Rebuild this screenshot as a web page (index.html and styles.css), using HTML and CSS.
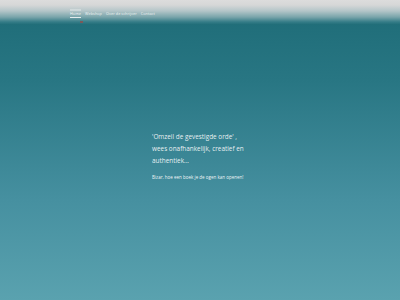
FILE: index.html
```html
<!DOCTYPE html>
<html lang="nl">
<head>
    <meta charset="UTF-8">
    <meta name="viewport" content="width=device-width, initial-scale=1.0">
    <title>Home</title>
    <link rel="stylesheet" href="styles.css">
</head>
<body>
    <header class="top">
        <nav class="menu">
            <a class="menu-item active" href="#">Home</a>
            <a class="menu-item" href="#">Webshop</a>
            <a class="menu-item" href="#">Over de schrijver</a>
            <a class="menu-item" href="#">Contact</a>
        </nav>
        <span class="flag"></span>
    </header>
    <main class="hero">
        <div class="quote">
            <p class="quote-text">'Omzeil de gevestigde orde' ,<br>wees onafhankelijk, creatief en<br>authentiek...</p>
            <p class="quote-sub">Bizar, hoe een boek je de ogen kan openen!</p>
        </div>
    </main>
</body>
</html>
```

FILE: styles.css
```css
html, body {
    margin: 0;
    padding: 0;
    height: 100%;
}
body {
    font-family: "Open Sans", Arial, sans-serif;
    background: linear-gradient(to bottom, #1d6b76 0px, #287683 80px, #4690a0 200px, #5aa2af 300px);
    color: #fff;
    overflow: hidden;
}
.top {
    height: 25px;
    background: linear-gradient(to bottom, #dcdcdc 0px, #d6d7d7 5px, #b3c5c8 11px, #7aa5ab 17px, #347c87 22px, #1e6c77 25px);
    position: relative;
}
.menu {
    display: flex;
    gap: 4px;
    padding-left: 70px;
    padding-top: 11px;
}
.menu-item {
    font-size: 3.8px;
    letter-spacing: 0.05px;
    color: rgba(255, 255, 255, 0.85);
    text-decoration: none;
    line-height: 6px;
}
.menu-item.active {
    border-top: 2px solid rgba(255, 255, 255, 0.3);
    border-bottom: 1px solid rgba(255, 255, 255, 0.8);
    margin-top: -2px;
}
.flag {
    position: absolute;
    left: 80px;
    top: 21px;
    width: 3px;
    height: 2px;
    background: #7a5a5a;
}
.hero {
    display: flex;
    justify-content: flex-start;
    padding-left: 152px;
    padding-top: 106px;
}
.quote-text {
    margin: 0;
    font-size: 6.4px;
    line-height: 12px;
    color: rgba(255, 255, 255, 0.9);
}
.quote-sub {
    margin: 7px 0 0;
    font-size: 4.5px;
    color: rgba(255, 255, 255, 0.95);
}
```
